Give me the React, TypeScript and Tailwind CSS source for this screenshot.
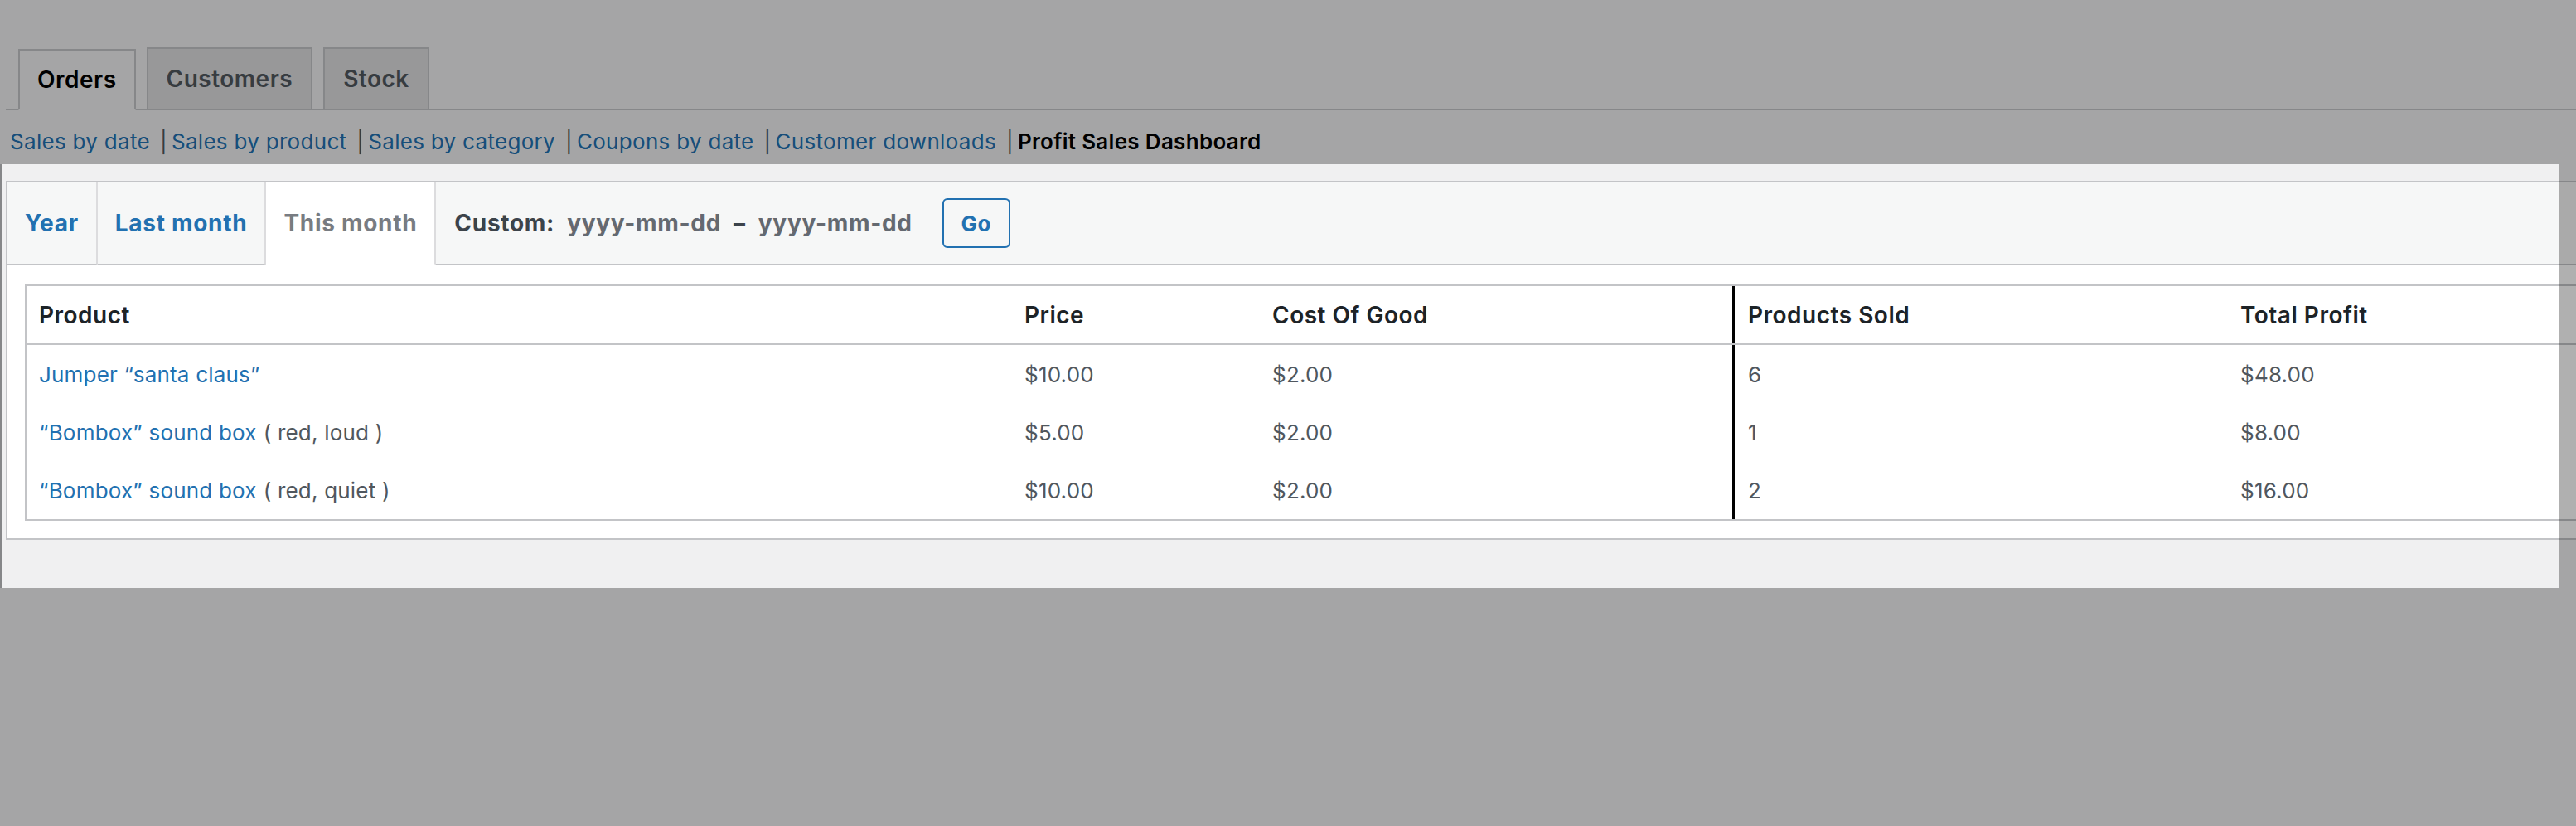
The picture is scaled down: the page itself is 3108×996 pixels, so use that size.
import type { ReactNode } from "react";

const reportLinks = [
  "Sales by date",
  "Sales by product",
  "Sales by category",
  "Coupons by date",
  "Customer downloads",
];

const rows: Array<{ name: string; variant?: string; price: string; cost: string; sold: string; profit: string }> = [
  { name: "Jumper \u201csanta claus\u201d", price: "$10.00", cost: "$2.00", sold: "6", profit: "$48.00" },
  { name: "\u201cBombox\u201d sound box", variant: "( red, loud )", price: "$5.00", cost: "$2.00", sold: "1", profit: "$8.00" },
  { name: "\u201cBombox\u201d sound box", variant: "( red, quiet )", price: "$10.00", cost: "$2.00", sold: "2", profit: "$16.00" },
];

const Cell = ({ children, divider }: { children: ReactNode; divider?: boolean }) => (
  <div
    className={`flex items-center pl-[15px] ${
      divider ? "border-l-[3px] border-black pl-[16px]" : ""
    }`}
  >
    {children}
  </div>
);

export default function App() {
  return (
    <div className="min-h-screen w-[3108px] overflow-hidden bg-[#f0f0f1] font-[family-name:Inter,sans-serif]">
      {/* top nav tabs */}
      <div className="pt-[57px]">
        <div className="ml-[7px] flex items-end gap-[13px] border-b-2 border-[#c3c4c7] pl-[15px] text-[28px] font-semibold tracking-[0.5px]">
          <div className="-mb-[2px] flex h-[74px] items-center border-2 border-b-[#f0f0f1] border-[#c3c4c7] bg-[#f0f0f1] px-[21px] text-black">
            Orders
          </div>
          <div className="flex h-[74px] items-center border-2 border-b-0 border-[#c3c4c7] bg-[#dcdcde] px-[22px] text-[#50575e]">
            Customers
          </div>
          <div className="flex h-[74px] items-center border-2 border-b-0 border-[#c3c4c7] bg-[#dcdcde] px-[22px] text-[#50575e]">
            Stock
          </div>
        </div>

        {/* report links */}
        <div className="mt-[12px] flex h-[50px] items-center pl-[12px] text-[26px] tracking-[0.3px]">
          {reportLinks.map((label) => (
            <span key={label} className="flex items-center">
              <a className="text-[#2271b1]">{label}</a>
              <span className="ml-[12px] mr-[5px] text-[#50575e]">|</span>
            </span>
          ))}
          <span className="font-semibold text-black">Profit Sales Dashboard</span>
        </div>
      </div>

      {/* highlighted panel */}
      <div className="relative mt-[3px] h-[511px] w-[3088px] border-l-2 border-[#c3c4c7] bg-[#f0f0f1] pl-[5px] pt-[20px]">
        <div className="w-[3150px] border-2 border-[#c3c4c7] bg-white">
          {/* range tabs */}
          <div className="flex h-[100px] bg-[#f6f7f7] text-[28px] font-bold tracking-[0.7px]">
            <div className="flex items-center border-b-2 border-r-2 border-b-[#c3c4c7] border-r-[#dcdcde] px-[21px] text-[#2271b1]">
              Year
            </div>
            <div className="flex items-center border-b-2 border-r-2 border-b-[#c3c4c7] border-r-[#dcdcde] px-[21px] text-[#2271b1]">
              Last month
            </div>
            <div className="flex items-center border-r-2 border-b-2 border-b-white border-r-[#dcdcde] bg-white px-[21px] text-[#787c82]">
              This month
            </div>
            <div className="flex flex-1 items-center border-b-2 border-[#c3c4c7] pl-[22px]">
              <span className="text-[#3c434a]">Custom:</span>
              <span className="ml-[15px] text-[#646970]">yyyy-mm-dd</span>
              <span className="mx-[15px] text-[#3c434a]">&ndash;</span>
              <span className="text-[#646970]">yyyy-mm-dd</span>
              <button className="ml-[36px] flex h-[60px] w-[82px] items-center justify-center rounded-[6px] border-2 border-[#2271b1] bg-[#f6f7f7] text-[26px] font-bold tracking-[0.4px] text-[#2271b1]">
                Go
              </button>
            </div>
          </div>

          {/* table */}
          <div className="pb-[21px] pl-[21px] pt-[23px]">
            <div className="w-[3200px] border-2 border-[#c3c4c7] text-[26px] tracking-[0.2px] text-[#50575e]">
              <div className="grid h-[71px] grid-cols-[1189px_299px_570px_598px_1fr] border-b-2 border-[#c3c4c7] text-[28px] font-semibold tracking-[0.5px] text-[#1d2327]">
                <Cell>Product</Cell>
                <Cell>Price</Cell>
                <Cell>Cost Of Good</Cell>
                <Cell divider>Products Sold</Cell>
                <Cell>Total Profit</Cell>
              </div>
              {rows.map((row, i) => (
                <div key={i} className="grid h-[70px] grid-cols-[1189px_299px_570px_598px_1fr]">
                  <Cell>
                    <a className="text-[#2271b1]">{row.name}</a>
                    {row.variant ? <span className="ml-[8px]">{row.variant}</span> : null}
                  </Cell>
                  <Cell>{row.price}</Cell>
                  <Cell>{row.cost}</Cell>
                  <Cell divider>{row.sold}</Cell>
                  <Cell>{row.profit}</Cell>
                </div>
              ))}
            </div>
          </div>
        </div>

        {/* spotlight dim around the panel */}
        <div className="pointer-events-none absolute inset-0 shadow-[0_0_0_9999px_rgba(0,0,0,0.31)]" />
      </div>
    </div>
  );
}
